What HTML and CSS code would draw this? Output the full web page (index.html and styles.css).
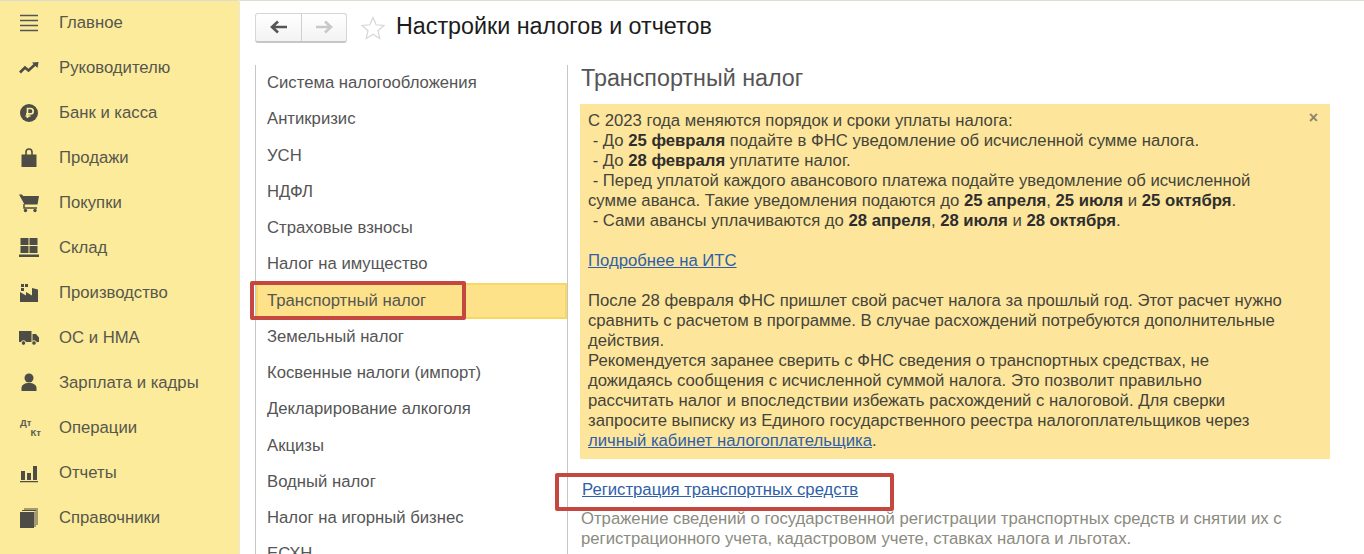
FILE: index.html
```html
<!DOCTYPE html>
<html lang="ru">
<head>
<meta charset="utf-8">
<title>Настройки налогов и отчетов</title>
<link rel="stylesheet" href="styles.css">
</head>
<body>
<div class="app">
  <nav class="side">
    <a class="nav-item"><svg class="ico" viewBox="0 0 20 20"><path d="M1 2.500h18M1 7.500h18M1 12.500h18M1 17.500h18" stroke="#555" stroke-width="1.400" fill="none"/></svg><span>Главное</span></a>
    <a class="nav-item"><svg class="ico" viewBox="0 0 20 20"><path d="M1 14.500l5-5 3.500 3L16 6.500" stroke="#4d4d45" stroke-width="2.600" fill="none"/><path d="M13 4.500l6.500-.5-1 6z" fill="#4d4d45"/></svg><span>Руководителю</span></a>
    <a class="nav-item"><svg class="ico" viewBox="0 0 20 20"><circle cx="10" cy="10" r="9" fill="#4d4d45"/><path d="M8.500 15V5.500h3a2.600 2.600 0 0 1 0 5.400h-4.500M6.500 13h5" stroke="#fbeb9b" stroke-width="1.700" fill="none"/></svg><span>Банк и касса</span></a>
    <a class="nav-item"><svg class="ico" viewBox="0 0 20 20"><path d="M2.500 6.500h15V19h-15z" fill="#4d4d45"/><path d="M7 9V4a3 3 0 0 1 6 0v5" stroke="#4d4d45" stroke-width="1.600" fill="none"/></svg><span>Продажи</span></a>
    <a class="nav-item"><svg class="ico" viewBox="0 0 20 20"><path d="M0 1.500h3l1.200 1.500H20l-1.500 8.500H5.500z" fill="#4d4d45"/><path d="M5 11v4h13" stroke="#4d4d45" stroke-width="1.500" fill="none"/><circle cx="6.500" cy="17.500" r="1.700" fill="#4d4d45"/><circle cx="16" cy="17.500" r="1.700" fill="#4d4d45"/></svg><span>Покупки</span></a>
    <a class="nav-item"><svg class="ico" viewBox="0 0 20 20"><path d="M1.500 0h8v7h-8zM10.500 0h8v7h-8zM1.500 8h8v7h-8zM10.500 8h8v7h-8zM0 16.500h20V19H0z" fill="#4d4d45"/></svg><span>Склад</span></a>
    <a class="nav-item"><svg class="ico" viewBox="0 0 20 20"><path d="M1 19V9l6 3.500V9l6 3.500V5l6 1.500V19z" fill="#4d4d45"/><path d="M2 1h3v3H2zM6 1h3v3H6zM2 5h3v3H2z" fill="#4d4d45"/></svg><span>Производство</span></a>
    <a class="nav-item"><svg class="ico" viewBox="0 0 20 20"><path d="M0 3h12.500v11H0zM13.500 6h3.500l3 3.500V14h-6.500z" fill="#4d4d45"/><circle cx="4.500" cy="15" r="2.300" fill="#4d4d45" stroke="#fbeb9b"/><circle cx="15" cy="15" r="2.300" fill="#4d4d45" stroke="#fbeb9b"/></svg><span>ОС и НМА</span></a>
    <a class="nav-item"><svg class="ico" viewBox="0 0 20 20"><circle cx="10" cy="5" r="4.500" fill="#4d4d45"/><path d="M2.500 18v-3c0-3 3-5 7.500-5s7.500 2 7.500 5v3z" fill="#4d4d45"/></svg><span>Зарплата и кадры</span></a>
    <a class="nav-item"><span class="dtkt"><i>Дт</i><b>Кт</b></span><span>Операции</span></a>
    <a class="nav-item"><svg class="ico" viewBox="0 0 20 20"><path d="M2 8h4v9H2zM8 10h4v7H8zM14 3h4v14h-4zM1 18h18v1.200H1z" fill="#4d4d45"/></svg><span>Отчеты</span></a>
    <a class="nav-item"><svg class="ico" viewBox="0 0 20 20"><path d="M1 4h14v16H1z" fill="#4d4d45"/><path d="M16 3.500V19M18 2v15M3 2.500h14M5 1h14" stroke="#4d4d45" fill="none"/></svg><span>Справочники</span></a>
  </nav>
  <main class="main">
    <header class="top">
      <div class="nav-btns">
        <button class="hist"><svg viewBox="0 0 18 14" width="18" height="14"><path d="M8 1.500L2 7l6 5.500M2 7h15" stroke="#555" stroke-width="2.600" fill="none"/></svg></button>
        <button class="hist"><svg viewBox="0 0 18 14" width="18" height="14"><path d="M10 1.500L16 7l-6 5.500M16 7H1" stroke="#c8c8c8" stroke-width="2.600" fill="none"/></svg></button>
      </div>
      <svg class="star" viewBox="0 0 24 24"><path d="M12 1.500l3.100 7.300 7.900.7-6 5.200 1.800 7.700L12 18.300l-6.800 4.100L7 14.700 1 9.500l7.900-.7z" fill="#fff" stroke="#d6d6d6" stroke-width="1.200"/></svg>
      <h1 class="title">Настройки налогов и отчетов</h1>
    </header>
    <div class="panes">
      <ul class="list">
        <li>Система налогообложения</li>
        <li>Антикризис</li>
        <li>УСН</li>
        <li>НДФЛ</li>
        <li>Страховые взносы</li>
        <li>Налог на имущество</li>
        <li class="sel">Транспортный налог</li>
        <li>Земельный налог</li>
        <li>Косвенные налоги (импорт)</li>
        <li>Декларирование алкоголя</li>
        <li>Акцизы</li>
        <li>Водный налог</li>
        <li>Налог на игорный бизнес</li>
        <li>ЕСХН</li>
      </ul>
      <section class="detail">
        <h2 class="head">Транспортный налог</h2>
        <div class="notice">
          <span class="close">×</span>
          <p>С 2023 года меняются порядок и сроки уплаты налога:<br>
          &nbsp;- До <b>25 февраля</b> подайте в ФНС уведомление об исчисленной сумме налога.<br>
          &nbsp;- До <b>28 февраля</b> уплатите налог.<br>
          &nbsp;- Перед уплатой каждого авансового платежа подайте уведомление об исчисленной<br>
          сумме аванса. Такие уведомления подаются до <b>25 апреля</b>, <b>25 июля</b> и <b>25 октября</b>.<br>
          &nbsp;- Сами авансы уплачиваются до <b>28 апреля</b>, <b>28 июля</b> и <b>28 октября</b>.</p>
          <p><a class="link">Подробнее на ИТС</a></p>
          <p>После 28 февраля ФНС пришлет свой расчет налога за прошлый год. Этот расчет нужно<br>
          сравнить с расчетом в программе. В случае расхождений потребуются дополнительные<br>
          действия.<br>
          Рекомендуется заранее сверить с ФНС сведения о транспортных средствах, не<br>
          дожидаясь сообщения с исчисленной суммой налога. Это позволит правильно<br>
          рассчитать налог и впоследствии избежать расхождений с налоговой. Для сверки<br>
          запросите выписку из Единого государственного реестра налогоплательщиков через<br>
          <a class="link">личный кабинет налогоплательщика</a>.</p>
        </div>
        <a class="link reg">Регистрация транспортных средств</a>
        <p class="desc">Отражение сведений о государственной регистрации транспортных средств и снятии их с<br>
        регистрационного учета, кадастровом учете, ставках налога и льготах.</p>
      </section>
    </div>
  </main>
</div>
<div class="mark mark-a"></div>
<div class="mark mark-b"></div>
</body>
</html>
```

FILE: styles.css
```css
* { box-sizing: border-box; }
html, body { margin: 0; height: 100%; overflow: hidden; background: #fff; }
body { font-family: "Liberation Sans", Arial, sans-serif; font-size: 16.7px; color: #4a4a42; position: relative; }
.app { display: flex; height: 554px; box-shadow: inset 0 1px #dcdcd0; }
.side { width: 240px; flex: none; background: #fbeb9b; border-right: 2px solid #f3e9bd; box-shadow: inset 0 1px #dcdcd0; overflow: hidden; }
.nav-item { display: flex; align-items: center; height: 45px; padding-left: 19px; gap: 20px; color: #57574c; line-height: 44px; }
.ico { width: 20px; height: 20px; flex: none; }
.dtkt { width: 20px; height: 20px; flex: none; position: relative; font-size: 9.500px; line-height: 9px; font-weight: bold; color: #5c5c52; }
.dtkt i { position: absolute; left: 1px; top: 0; font-style: normal; }
.dtkt b { position: absolute; right: -2px; top: 10px; }
.main { flex: 1; min-width: 0; display: flex; flex-direction: column; }
.top { display: flex; align-items: center; height: 65px; padding: 0 0 10px 15px; flex: none; }
.nav-btns { display: flex; width: 92px; height: 30px; border: 1px solid #d6d6d6; border-bottom: 2px solid #c6c6c6; border-radius: 3px; background: linear-gradient(#fff, #f3f3f3); }
.hist { flex: 1; border: 0; padding: 0; background: none; display: flex; align-items: center; justify-content: center; }
.hist + .hist { border-left: 1px solid #d0d0d0; flex: 0 0 45px; }
.star { width: 24px; height: 24px; margin-left: 14px; flex: none; }
.title { margin: 0 0 4px 11px; font-size: 23.300px; font-weight: normal; color: #1c1c1c; line-height: 28px; white-space: nowrap; }
.panes { display: flex; flex: 1; min-height: 0; padding-left: 15px; overflow: hidden; }
.list { list-style: none; margin: 0; padding: 0; width: 313px; flex: none; border-left: 1px solid #c6c6c6; border-right: 1px solid #c6c6c6; overflow: hidden; }
.list li { height: 36.250px; padding-left: 11px; line-height: 36px; color: #555; white-space: nowrap; }
.list .sel { background: #fee28a; box-shadow: inset 0 0 0 2px #f8d765; }
.detail { flex: 1; min-width: 0; padding-left: 13px; overflow: hidden; }
.head { margin: 0; height: 39px; font-size: 23.300px; font-weight: normal; line-height: 26px; color: #555; }
.notice { position: relative; width: 750px; height: 355px; margin-left: -1px; padding: 7px 8px; background: #fde69c; color: #44443b; line-height: 20px; white-space: nowrap; }
.notice p { margin: 0 0 20px; }
.notice b { color: #2e2e2e; }
.close { position: absolute; top: 5px; right: 12px; font-size: 16px; font-weight: bold; color: #8a8468; line-height: 18px; }
.link { color: #2f5fa8; text-decoration: underline; }
.reg { display: block; margin-top: 21px; margin-left: 1px; line-height: 20px; }
.desc { margin: 9px 0 0; line-height: 20px; color: #8b8b80; white-space: nowrap; }
.mark { position: absolute; border: 4px solid #c4483f; border-radius: 2px; pointer-events: none; }
.mark-a { left: 250px; top: 281px; width: 216px; height: 39px; }
.mark-b { left: 555px; top: 473px; width: 339px; height: 38px; }
```
